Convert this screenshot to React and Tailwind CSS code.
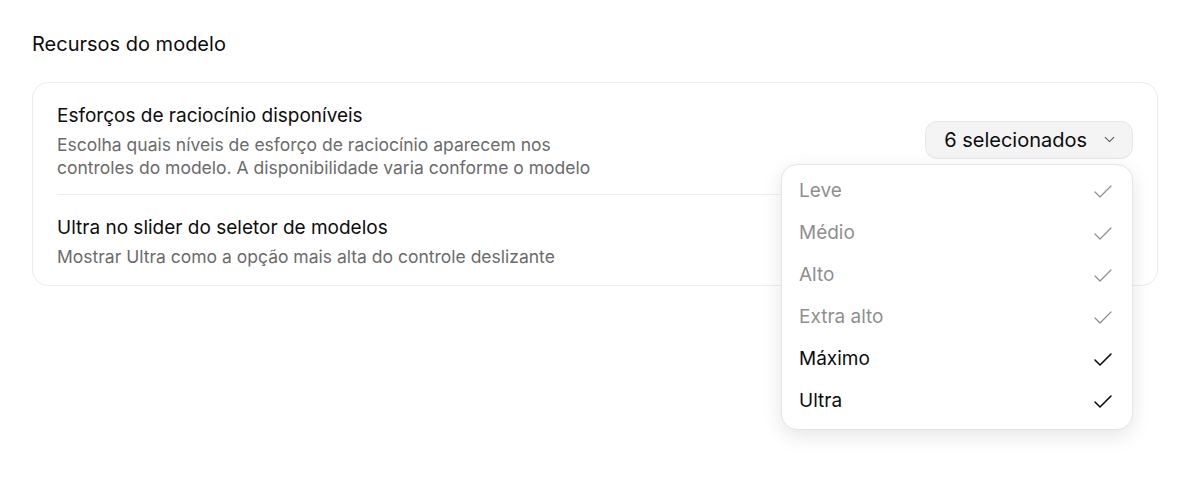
import React from "react";
import { ChevronDown, Check } from "lucide-react";

const efforts = [
  { label: "Leve", muted: true },
  { label: "Médio", muted: true },
  { label: "Alto", muted: true },
  { label: "Extra alto", muted: true },
  { label: "Máximo", muted: false },
  { label: "Ultra", muted: false },
];

export default function App() {
  return (
    <div
      className="min-h-screen bg-white px-8 pt-[30px] text-[#0d0d0d]"
      style={{ fontFamily: "Inter, 'Noto Sans', sans-serif" }}
    >
      <h2 className="text-[20px] leading-7 mb-[24px]">Recursos do modelo</h2>

      <div className="relative rounded-2xl border border-[#ececec] px-6 mr-[10px]">
        <div className="flex items-center justify-between pt-[20px] pb-[15px] border-b border-[#efefef]">
          <div className="max-w-[545px]">
            <div className="text-[19px] leading-[26px]">Esforços de raciocínio disponíveis</div>
            <div className="text-[17.5px] leading-[23px] text-[#6b6b6b] mt-[4px]">
              Escolha quais níveis de esforço de raciocínio aparecem nos controles do modelo. A disponibilidade varia conforme o modelo
            </div>
          </div>

          <div className="relative mb-[3px]">
            <button className="flex items-center gap-[14px] h-[38px] pl-[18px] pr-[14px] rounded-xl bg-[#f4f4f4] border border-[#e6e6e6] text-[20px]">
              6 selecionados
              <ChevronDown size={17} strokeWidth={1.5} className="text-[#555]" />
            </button>

            <div className="absolute right-0 top-[43px] w-[352px] rounded-2xl border border-[#e5e5e5] bg-white py-[6px] shadow-[0_6px_20px_rgba(0,0,0,0.10)] z-10">
              {efforts.map((e) => (
                <div
                  key={e.label}
                  className={
                    "flex items-center justify-between h-[42px] pl-[17px] pr-[17px] text-[19px] " +
                    (e.muted ? "text-[#8f8f8f]" : "text-[#0d0d0d]")
                  }
                >
                  <span>{e.label}</span>
                  <Check size={24} strokeWidth={e.muted ? 1.2 : 1.6} />
                </div>
              ))}
            </div>
          </div>
        </div>

        <div className="flex items-center justify-between pt-[20px] pb-[17px]">
          <div>
            <div className="text-[19px] leading-[26px]">Ultra no slider do seletor de modelos</div>
            <div className="text-[17.5px] leading-[23px] text-[#6b6b6b] mt-[4px]">
              Mostrar Ultra como a opção mais alta do controle deslizante
            </div>
          </div>
          <div className="w-[40px] h-[24px] rounded-full bg-[#0285ff] p-[2px] flex justify-end">
            <div className="w-5 h-5 rounded-full bg-white" />
          </div>
        </div>
      </div>
    </div>
  );
}
